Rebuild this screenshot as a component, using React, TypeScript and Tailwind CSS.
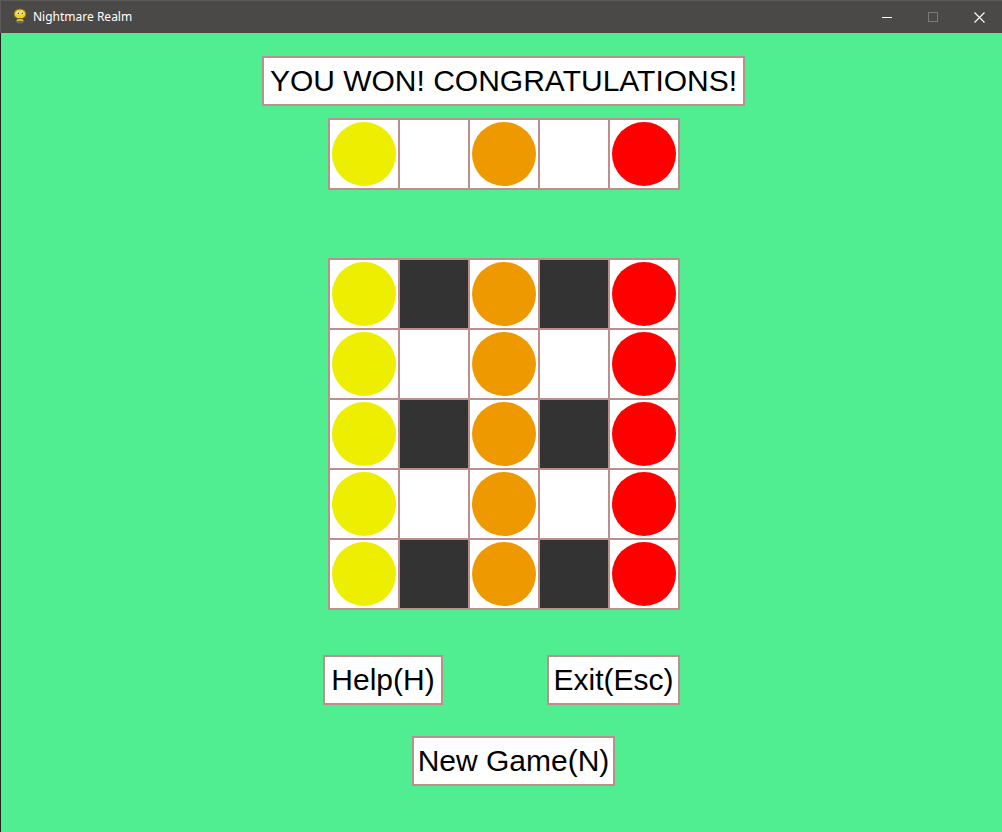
import React from "react";

const BORDER = "bg-[#bc8f8f]";

function Circle({ color }: { color: string }) {
  return <div className={`w-[64px] h-[64px] rounded-full ${color}`} />;
}

function Cell({ dark, circle }: { dark?: boolean; circle?: string }) {
  return (
    <div
      className={`w-[68px] h-[68px] flex items-center justify-center ${
        dark ? "bg-[#333333]" : "bg-white"
      }`}
    >
      {circle ? <Circle color={circle} /> : null}
    </div>
  );
}

const Y = "bg-[#eeee00]";
const O = "bg-[#ee9900]";
const R = "bg-[#ff0000]";

function Box({
  children,
  w,
  className = "",
}: {
  children: React.ReactNode;
  w: string;
  className?: string;
}) {
  return (
    <div
      className={`${w} h-[50px] border-2 border-[#bc8f8f] bg-white flex items-center justify-center text-[30px] text-black leading-none whitespace-nowrap ${className}`}
      style={{ fontFamily: '"Liberation Sans", Arial, sans-serif' }}
    >
      {children}
    </div>
  );
}

export default function App() {
  const topRow = [Y, undefined, O, undefined, R];
  const rows = [0, 1, 2, 3, 4];
  return (
    <div className="w-[1002px] h-[832px] flex flex-col bg-[#50ee90] overflow-hidden">
      {/* Title bar */}
      <div
        className="h-[33px] shrink-0 bg-[#4b4947] flex items-center border-t border-l border-[#5c5a58]"
        style={{ fontFamily: '"Noto Sans", "Open Sans", sans-serif' }}
      >
        <svg width="16" height="18" viewBox="0 0 16 18" className="ml-[11px]">
          <ellipse cx="8" cy="6" rx="6" ry="5" fill="#f2d21b" stroke="#7a5a10" strokeWidth="0.8" />
          <circle cx="6" cy="5" r="1.6" fill="#fff" />
          <circle cx="6.3" cy="5.2" r="0.8" fill="#222" />
          <circle cx="10" cy="5" r="1.6" fill="#fff" />
          <circle cx="10.3" cy="5.2" r="0.8" fill="#222" />
          <path d="M3 12 Q8 9 13 12 Q13 16 8 16 Q3 16 3 12Z" fill="#6b6a66" stroke="#3a3a3a" strokeWidth="0.6" />
          <path d="M5 12.5 Q8 11 11 12.5" stroke="#f2d21b" strokeWidth="1.4" fill="none" />
        </svg>
        <span className="ml-[5px] text-[12px] text-white leading-none">Nightmare Realm</span>
        <div className="ml-auto flex items-center h-full">
          <div className="w-[46px] h-full flex items-center justify-center">
            <div className="w-[10px] h-[1px] bg-white" />
          </div>
          <div className="w-[46px] h-full flex items-center justify-center">
            <div className="w-[10px] h-[10px] border border-[#7c7a78]" />
          </div>
          <div className="w-[46px] h-full flex items-center justify-center">
            <svg width="11" height="11" viewBox="0 0 11 11">
              <path d="M0.5 0.5 L10.5 10.5 M10.5 0.5 L0.5 10.5" stroke="#fff" strokeWidth="1.1" />
            </svg>
          </div>
        </div>
      </div>

      {/* Body */}
      <div className="flex-1 flex flex-col border-l border-[#222]">
        <div className="mt-[23px] ml-[261px]">
          <Box w="w-[483px]">YOU WON! CONGRATULATIONS!</Box>
        </div>

        <div className="mt-[12px] ml-[327px]">
          <div className={`w-[352px] p-[2px] grid grid-cols-5 gap-[2px] ${BORDER}`}>
            {topRow.map((c, i) => (
              <Cell key={i} circle={c} />
            ))}
          </div>
        </div>

        <div className="mt-[68px] ml-[327px]">
          <div className={`w-[352px] p-[2px] grid grid-cols-5 gap-[2px] ${BORDER}`}>
            {rows.map((r) => (
              <React.Fragment key={r}>
                <Cell circle={Y} />
                <Cell dark={r % 2 === 0} />
                <Cell circle={O} />
                <Cell dark={r % 2 === 0} />
                <Cell circle={R} />
              </React.Fragment>
            ))}
          </div>
        </div>

        <div className="mt-[45px] ml-[322px] flex">
          <Box w="w-[120px]">Help(H)</Box>
          <Box w="w-[133px]" className="ml-[104px]">
            Exit(Esc)
          </Box>
        </div>

        <div className="mt-[31px] ml-[411px]">
          <Box w="w-[203px]">New Game(N)</Box>
        </div>
      </div>
    </div>
  );
}
